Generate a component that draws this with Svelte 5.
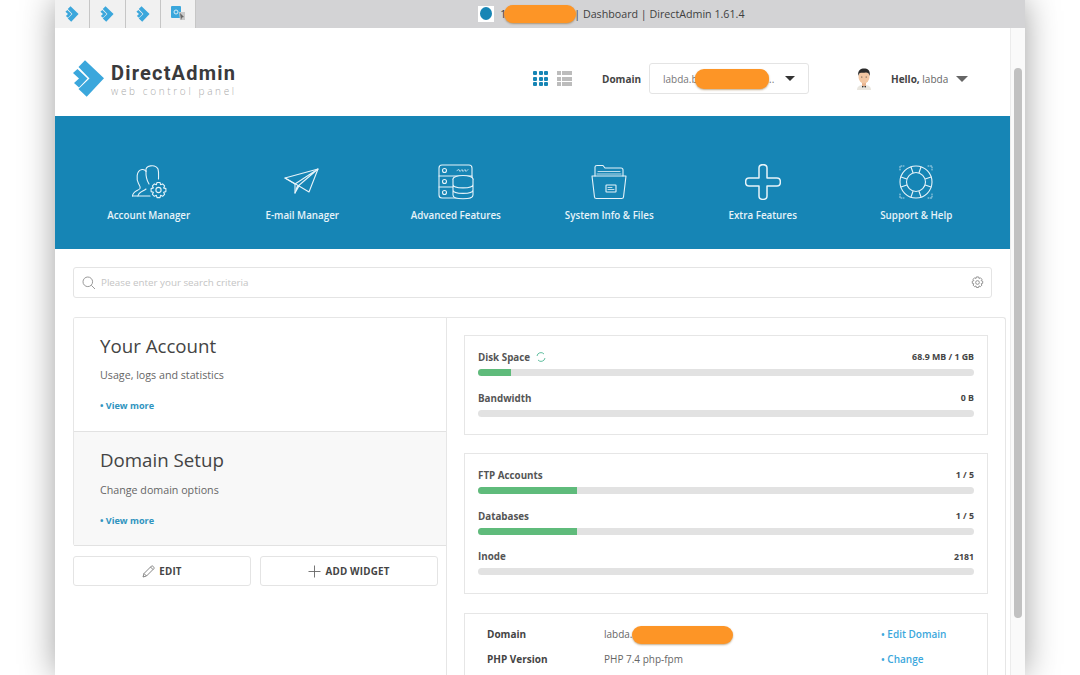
<script>
	const tabs = ['arrow', 'arrow', 'arrow', 'translate'];

	const navItems = [
		{ key: 'account', label: 'Account Manager' },
		{ key: 'email', label: 'E-mail Manager' },
		{ key: 'advanced', label: 'Advanced Features' },
		{ key: 'files', label: 'System Info & Files' },
		{ key: 'extra', label: 'Extra Features' },
		{ key: 'support', label: 'Support & Help' }
	];

	const usageTop = [
		{ name: 'Disk Space', value: '68.9 MB / 1 GB', pct: 6.7, spin: true },
		{ name: 'Bandwidth', value: '0 B', pct: 0 }
	];

	const usageBottom = [
		{ name: 'FTP Accounts', value: '1 / 5', pct: 20 },
		{ name: 'Databases', value: '1 / 5', pct: 20 },
		{ name: 'Inode', value: '2181', pct: 0 }
	];
</script>

{#snippet logoMark(w, h)}
	<svg width={w} height={h} viewBox="0 0 33 37" aria-hidden="true">
		<path d="M1 13 L5.500 9 L15.500 18.500 L7 27.500 L2 23 L7 18.500 Z" fill="#3ba7dc" />
		<path d="M13 0.300 L32 18.300 L14.700 36.700 L6.500 29 L17.500 18.500 L6.500 7 Z" fill="#3ba7dc" />
	</svg>
{/snippet}

{#snippet usageCard(rows)}
	<div class="card usage">
		{#each rows as row}
			<div class="usage-row">
				<div class="usage-head">
					<span class="usage-name">
						{row.name}
						{#if row.spin}
							<svg class="spin" width="10" height="10" viewBox="0 0 10 10" aria-hidden="true">
								<path d="M1 4 A4 4 0 0 1 8 2 M9 6 A4 4 0 0 1 2 8" fill="none" stroke="#62bfa0" stroke-width="1" />
							</svg>
						{/if}
					</span>
					<span class="usage-value">{row.value}</span>
				</div>
				<div class="bar"><div class="fill" style="width: {row.pct}%"></div></div>
			</div>
		{/each}
	</div>
{/snippet}

<div class="window">
	<div class="titlebar">
		<div class="tabs">
			{#each tabs as tab}
				<div class="tab">
					{#if tab === 'arrow'}
						{@render logoMark(14, 16)}
					{:else}
						<svg width="15" height="16" viewBox="0 0 15 16" aria-hidden="true">
							<rect x="0" y="0" width="10" height="12" rx="1" fill="#3ba7dc" />
							<circle cx="5" cy="6" r="2" fill="none" stroke="#d5edf8" stroke-width="1" />
							<path d="M8 6 h6 v8 h-5 z" fill="#c9c9c9" />
							<path d="M9 7 L13 11 L11 11.500 L10 14 Z" fill="#666" />
						</svg>
					{/if}
				</div>
			{/each}
		</div>
		<div class="page-title">
			<span class="favicon"><span></span></span>
			<span class="title-text">1<span class="blob blob-title"></span><span class="title-gap"></span>) | Dashboard | DirectAdmin 1.61.4</span>
		</div>
	</div>

	<div class="viewport">
		<div class="page">
			<header>
				<div class="logo">
					{@render logoMark(33, 37)}
					<div class="logo-text">
						<div class="logo-name">DirectAdmin</div>
						<div class="logo-sub">web control panel</div>
					</div>
				</div>

				<div class="view-switch">
					<div class="dots">
						{#each Array(9) as _}<span></span>{/each}
					</div>
					<div class="lines">
						{#each Array(3) as _}<span><i></i><b></b></span>{/each}
					</div>
				</div>

				<span class="domain-label">Domain</span>
				<div class="domain-select">
					<span class="domain-value">labda.b<span class="blob blob-select"></span></span>
					<span class="domain-dots">..</span>
					<span class="caret dark"></span>
				</div>

				<div class="user">
					<svg width="18" height="22" viewBox="0 0 18 22" aria-hidden="true">
						<path d="M2 22 C2 18 5 17 9 17 C13 17 16 18 16 22 Z" fill="#e9e6df" />
						<path d="M7 17 L9 19 L11 17 L11 19.500 L9 19 L7 19.500 Z" fill="#333" />
						<rect x="7" y="13" width="4" height="5" fill="#e8b48f" />
						<ellipse cx="9" cy="9" rx="5.500" ry="6.500" fill="#f2c7a3" />
						<path d="M3.200 8 C2.500 2 6 0.500 9 0.500 C12.500 0.500 15.500 2 14.800 8 C14 5.500 13 4.500 11 4.500 C8.500 5 6 4.500 5 5 C4 5.500 3.600 6.500 3.200 8 Z" fill="#2b2b2b" />
						<circle cx="6.800" cy="9" r=".6" fill="#333" />
						<circle cx="11.200" cy="9" r=".6" fill="#333" />
					</svg>
					<span class="hello"><b>Hello,</b> labda</span>
					<span class="caret grey"></span>
				</div>
			</header>

			<nav>
				{#each navItems as item}
					<a class="nav-item" href="#top">
						<svg class="nav-icon" width="36" height="36" viewBox="0 0 36 36" fill="none" stroke="#e6f3f9" stroke-width="1.100" stroke-linejoin="round" stroke-linecap="round" aria-hidden="true">
							{#if item.key === 'account'}
								<path d="M1.500 32 C2 27 7 27 9 24.500 C9.800 23 8.600 21.500 7.500 19.500 C5.500 16 4.800 6.500 11 5.500 C12.800 5.200 14.200 6 15 7.200" />
								<path d="M1.500 32 H19" />
								<path d="M7 32 C7.500 28 12 27.500 15 25" />
								<path d="M15 7 C14 1.500 24 -0.500 27 5 C28 8 27.500 12 27.500 15" />
								<path d="M15 7 C14.800 11 15.500 16 18 20" />
								<circle cx="27.500" cy="26" r="2.600" />
								<path d="M26 18.500 h3 l.6 2.200 2-.8 2 2 -1 2 2.300.7 v3 l-2.300.7 1 2 -2 2 -2-1 -.6 2.300 h-3 l-.6-2.300 -2 1 -2-2 1-2 -2.300-.7 v-3 l2.300-.7 -1-2 2-2 2 .8 z" />
							{:else if item.key === 'email'}
								<path d="M1 14 L34 5 L25 28 L15 22 Z" />
								<path d="M1 14 L11 20 L34 5 L13 23 L11 29 L15 22" />
								<path d="M11 20 L11 29" />
							{:else if item.key === 'advanced'}
								<rect x="1" y="1" width="33" height="33" rx="3" />
								<path d="M1 12 H34 M1 23 H17" />
								<circle cx="6.500" cy="6.500" r="2" />
								<circle cx="6.500" cy="17.500" r="2" />
								<circle cx="6.500" cy="28.500" r="2" />
								<path d="M19 6.500 L21 5.500 L22 7.500 L24 5.500 L25 7.500 L27 5.500 L28 7.500 L30 5.500" stroke-width=".7" />
								<ellipse cx="25" cy="15" rx="10" ry="3.500" fill="#1685b5" />
								<path d="M15 15 V31 C15 36 35 36 35 31 V15 M15 20.500 C15 25 35 25 35 20.500 M15 26 C15 30.500 35 30.500 35 26" fill="#1685b5" />
							{:else if item.key === 'files'}
								<path d="M4 12 V3 C4 2 5 1.500 6 1.500 H12 L14 4 H30 C31 4 32 5 32 6 V12" />
								<path d="M6 10 H30 M7 7.500 H29" stroke-width=".8" />
								<path d="M1 12 H35 L32.500 33 C32.500 34 31.500 34.500 30.500 34.500 H5.500 C4.500 34.500 3.500 34 3.500 33 Z" />
								<rect x="15" y="21" width="10" height="7" rx=".5" />
								<path d="M17 23.500 H21 M17 25.500 H23" stroke-width=".8" />
							{:else if item.key === 'extra'}
								<path stroke-width="1.500" d="M14 4 C14 -.5 22 -.5 22 4 V14 H32 C36.500 14 36.500 22 32 22 H22 V32 C22 36.500 14 36.500 14 32 V22 H4 C-.5 22 -.5 14 4 14 H14 Z" />
							{:else}
								<circle cx="18" cy="18" r="16" />
								<circle cx="18" cy="18" r="9.500" />
								<path d="M13 3 L15 8.800 M23 3 L21 8.800 M13 33 L15 27.200 M23 33 L21 27.200 M3 13 L8.800 15 M3 23 L8.800 21 M33 13 L27.200 15 M33 23 L27.200 21" />
								<path d="M2 6 V2 H6 M30 2 H34 V6 M2 30 V34 H6 M30 34 H34 V30" stroke-dasharray="1 1.500" stroke-width=".8" />
							{/if}
						</svg>
						<span>{item.label}</span>
					</a>
				{/each}
			</nav>

			<div class="search">
				<svg width="14" height="14" viewBox="0 0 14 14" fill="none" stroke="#9a9a9a" stroke-width="1" aria-hidden="true">
					<circle cx="5.800" cy="5.800" r="4.800" />
					<path d="M9.300 9.300 L13 13" />
				</svg>
				<span class="placeholder">Please enter your search criteria</span>
				<svg class="search-gear" width="13" height="13" viewBox="0 0 14 14" fill="none" stroke="#8c8c8c" stroke-width="1" aria-hidden="true">
					<circle cx="7" cy="7" r="2" />
					<path d="M5.800 1 h2.400 l.4 1.700 1.500-.8 1.700 1.700 -.9 1.400 1.700.5 v2.400 l-1.700.5 .9 1.400 -1.700 1.700 -1.500-.8 -.4 1.700 h-2.400 l-.4-1.700 -1.500.8 -1.700-1.700 .9-1.400 -1.700-.5 v-2.400 l1.700-.5 -.9-1.400 1.700-1.700 1.500.8 z" />
				</svg>
			</div>

			<main>
				<section class="left">
					<div class="blocks">
						<div class="block">
							<h2>Your Account</h2>
							<p>Usage, logs and statistics</p>
							<a class="more" href="#top">• View more</a>
						</div>
						<div class="block active">
							<h2>Domain Setup</h2>
							<p>Change domain options</p>
							<a class="more" href="#top">• View more</a>
						</div>
					</div>
					<div class="actions">
						<button>
							<svg width="13" height="13" viewBox="0 0 13 13" fill="none" stroke="#777" stroke-width=".9" aria-hidden="true">
								<path d="M1 12 L2 8.500 L9.500 1 C10.500 .3 12.500 2.300 12 3.500 L4.500 11 Z M2 8.500 L4.500 11 M8.500 2 L11 4.500" />
							</svg>
							EDIT
						</button>
						<button>
							<svg width="13" height="13" viewBox="0 0 13 13" fill="none" stroke="#666" stroke-width=".9" aria-hidden="true">
								<path d="M6.500 .5 V12.500 M.5 6.500 H12.500" />
							</svg>
							ADD WIDGET
						</button>
					</div>
				</section>

				<section class="right">
					{@render usageCard(usageTop)}
					{@render usageCard(usageBottom)}
					<div class="card info">
						<div class="info-row">
							<b>Domain</b>
							<span class="info-value">labda.<span class="blob blob-domain"></span></span>
							<a href="#top">• Edit Domain</a>
						</div>
						<div class="info-row">
							<b>PHP Version</b>
							<span class="info-value">PHP 7.4 php-fpm</span>
							<a href="#top">• Change</a>
						</div>
					</div>
				</section>
			</main>
		</div>

		<div class="scrollbar"><div class="thumb"></div></div>
	</div>
</div>

<style>
	:global(body) {
		margin: 0;
		background: #fff;
		overflow: hidden;
	}

	.window {
		width: 970px;
		height: 675px;
		margin-left: 55px;
		display: flex;
		flex-flow: column;
		overflow: hidden;
		font-family: 'Open Sans', 'Liberation Sans', sans-serif;
		color: #444;
		background: #fff;
		box-shadow: 0 0 32px rgba(0, 0, 0, 0.38);
		position: relative;
	}

	.titlebar {
		height: 28px;
		flex: none;
		background: #d3d3d5;
		position: relative;
		display: flex;
	}

	.tabs {
		display: flex;
	}

	.tab {
		width: 35.300px;
		height: 28px;
		box-sizing: border-box;
		background: #f1f1f1;
		border-right: 1px solid #c6c6c6;
		display: flex;
		align-items: center;
		justify-content: center;
	}

	.page-title {
		display: flex;
		align-items: center;
		margin-left: 282px;
		font-size: 10.700px;
		line-height: 14px;
		padding-bottom: 1px;
		color: #3f3f3f;
		white-space: nowrap;
	}

	.favicon {
		width: 16px;
		height: 16px;
		background: #fff;
		display: flex;
		align-items: center;
		justify-content: center;
		margin-right: 6px;
	}

	.favicon span {
		width: 12px;
		height: 13px;
		border-radius: 50%;
		background: #1685b5;
	}

	.title-text {
		position: relative;
	}

	.title-gap {
		display: inline-block;
		width: 62px;
	}

	.blob {
		position: absolute;
		background: #fd9526;
		border-radius: 9px;
		box-shadow: 0 1px 2px rgba(120, 70, 0, 0.45);
	}

	.blob-title {
		left: 4px;
		top: -2px;
		width: 72px;
		height: 18px;
	}

	.viewport {
		flex: 1;
		min-height: 0;
		display: flex;
	}

	.page {
		width: 955px;
		flex: none;
		display: flex;
		flex-flow: column;
	}

	.scrollbar {
		flex: 1;
		background: #fafafa;
		border-left: 1px solid #ececec;
		padding: 40px 3px 0 3px;
	}

	.thumb {
		height: 550px;
		border-radius: 4px;
		background: #c1c1c1;
	}

	header {
		height: 88px;
		flex: none;
		box-sizing: border-box;
		display: flex;
		align-items: center;
		padding: 13px 0 0 17px;
	}

	.logo {
		display: flex;
		align-items: center;
		gap: 6px;
		width: 461px;
	}

	.logo-text {
		display: flex;
		flex-flow: column;
		gap: 3px;
		padding-top: 2px;
	}

	.logo-name {
		font-family: Roboto, 'Open Sans', sans-serif;
		font-weight: 700;
		font-size: 20px;
		line-height: 20px;
		letter-spacing: 1.2px;
		color: #3a3a3c;
	}

	.logo-sub {
		font-size: 10px;
		line-height: 10px;
		letter-spacing: 2.650px;
		font-weight: 300;
		color: #aaa;
		white-space: nowrap;
	}

	.view-switch {
		display: flex;
		gap: 9px;
		width: 69px;
	}

	.dots {
		display: grid;
		grid-template-columns: repeat(3, 4px);
		grid-auto-rows: 4px;
		gap: 1.500px;
		width: 15px;
	}

	.dots span {
		background: #1685b5;
		border-radius: 1px;
	}

	.lines {
		display: grid;
		grid-auto-rows: 4px;
		gap: 1.500px;
	}

	.lines span {
		display: flex;
		gap: 1px;
	}

	.lines i {
		width: 4px;
		background: #bcbcbc;
	}

	.lines b {
		width: 10px;
		background: #bcbcbc;
	}

	.domain-label {
		font-size: 10px;
		font-weight: 700;
		color: #444;
		width: 47px;
	}

	.domain-select {
		width: 160px;
		height: 31px;
		box-sizing: border-box;
		border: 1px solid #e4e4e4;
		border-radius: 3px;
		display: flex;
		align-items: center;
		padding: 0 13px;
		font-size: 10px;
		color: #777;
	}

	.domain-value {
		position: relative;
		width: 106px;
	}

	.domain-dots {
		flex: 1;
	}

	.blob-select {
		left: 32px;
		top: -3px;
		width: 74px;
		height: 20px;
	}

	.caret {
		width: 0;
		height: 0;
		border-left: 5px solid transparent;
		border-right: 5px solid transparent;
	}

	.caret.dark {
		border-top: 5px solid #333;
	}

	.caret.grey {
		border-left-width: 6px;
		border-right-width: 6px;
		border-top: 6px solid #666;
		margin-left: 8px;
	}

	.user {
		display: flex;
		align-items: center;
		margin-left: 46px;
	}

	.hello {
		font-size: 10px;
		color: #666;
		margin-left: 18px;
	}

	.hello b {
		color: #444;
	}

	nav {
		height: 133px;
		flex: none;
		box-sizing: border-box;
		background: #1685b5;
		display: grid;
		grid-template-columns: repeat(6, 1fr);
		padding: 48px 17px 0;
	}

	.nav-item {
		display: flex;
		flex-flow: column;
		align-items: center;
		color: #e6f3f9;
		text-decoration: none;
		font-size: 9.800px;
		font-weight: 600;
		white-space: nowrap;
	}

	.nav-icon {
		margin-bottom: 9px;
	}

	.search {
		height: 31px;
		flex: none;
		box-sizing: border-box;
		margin: 18px 18px 0;
		border: 1px solid #e4e4e4;
		border-radius: 3px;
		display: flex;
		align-items: center;
		padding: 0 7px 0 8px;
	}

	.placeholder {
		font-size: 9.800px;
		color: #c4c4c4;
		margin-left: 5px;
		flex: 1;
	}

	main {
		flex: 1;
		min-height: 0;
		margin: 19px 4px 0 18px;
		border-top: 1px solid #e6e6e6;
		border-right: 1px solid #e6e6e6;
		border-radius: 3px 3px 0 0;
		display: flex;
		overflow: hidden;
	}

	.left {
		width: 374px;
		flex: none;
		box-sizing: border-box;
		border-right: 1px solid #e6e6e6;
	}

	.blocks {
		border-left: 1px solid #e6e6e6;
		border-radius: 0 0 0 3px;
	}

	.block {
		height: 113px;
		box-sizing: border-box;
		padding: 15px 26px 0;
	}

	.block.active {
		height: 115px;
		background: #f8f8f8;
		border-top: 1px solid #e2e2e2;
		border-bottom: 1px solid #e2e2e2;
	}

	h2 {
		margin: 0;
		font-size: 18.700px;
		line-height: 26px;
		font-weight: 400;
		color: #444;
	}

	p {
		margin: 9px 0 0;
		font-size: 10.700px;
		line-height: 14px;
		color: #666;
	}

	.active p {
		margin-top: 10px;
	}

	.more {
		display: block;
		margin-top: 18px;
		font-size: 9.100px;
		font-weight: 700;
		line-height: 12px;
		color: #2f94c0;
		text-decoration: none;
	}

	.active .more {
		margin-top: 18px;
	}

	.actions {
		display: flex;
		gap: 9px;
		margin-top: 10px;
		padding-right: 8px;
	}

	button {
		flex: 1;
		height: 30px;
		background: #fff;
		border: 1px solid #e4e4e4;
		border-radius: 3px;
		display: flex;
		align-items: center;
		justify-content: center;
		gap: 4px;
		font-family: inherit;
		font-size: 9.800px;
		font-weight: 700;
		letter-spacing: 0.2px;
		color: #444;
	}

	.right {
		flex: 1;
		padding: 17px 17px 0;
		display: flex;
		flex-flow: column;
		gap: 18px;
		min-width: 0;
	}

	.card {
		flex: none;
		border: 1px solid #e6e6e6;
		box-sizing: border-box;
	}

	.usage {
		padding: 14px 13px 17.500px;
	}

	.usage-row + .usage-row {
		margin-top: 14.500px;
	}

	.usage-head {
		display: flex;
		justify-content: space-between;
		align-items: center;
		height: 14px;
		margin-bottom: 5px;
	}

	.usage-row + .usage-row .usage-name,
	.usage-row + .usage-row .usage-value {
		position: relative;
		top: 0.5px;
	}

	.usage-name {
		font-size: 9.800px;
		font-weight: 700;
		color: #555;
		display: flex;
		align-items: center;
		gap: 6px;
	}

	.usage-value {
		font-size: 8.800px;
		font-weight: 700;
		color: #444;
	}

	.bar {
		height: 7px;
		border-radius: 4px;
		background: #e2e2e2;
		overflow: hidden;
	}

	.fill {
		height: 100%;
		background: #5fbb7b;
	}

	.info {
		margin-top: 1px;
		padding: 8px 22px 20px;
		font-size: 10px;
	}

	.info-row {
		display: flex;
		height: 25px;
		align-items: center;
	}

	.info-row b {
		width: 117px;
		color: #444;
	}

	.info-value {
		width: 277px;
		color: #666;
		position: relative;
	}

	.blob-domain {
		left: 28px;
		top: -1px;
		width: 101px;
		height: 18px;
	}

	.info-row a {
		color: #3ba7dc;
		font-weight: 600;
		text-decoration: none;
	}
</style>
